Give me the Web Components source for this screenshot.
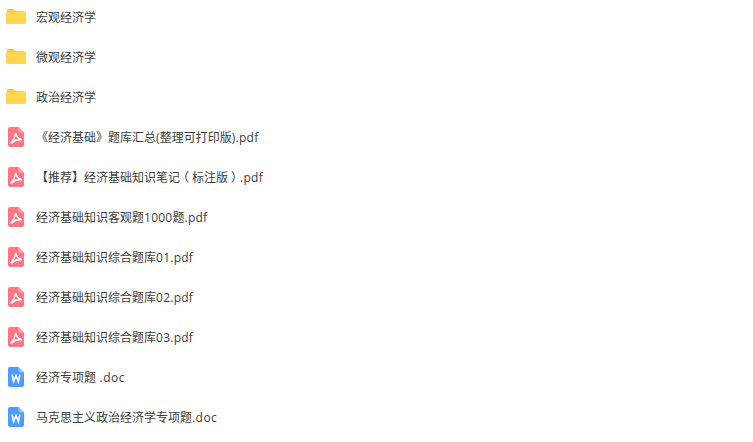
<!DOCTYPE html>
<html lang="zh-CN">
<head>
<meta charset="utf-8">
<title>文件列表</title>
<style>
  html, body { margin: 0; background: #fff; }
  body { font-family: "Noto Sans CJK SC", "Liberation Sans", sans-serif; }
  /* latin runs are a touch wider than the CJK font's own */
  .lat { font-family: "Open Sans", "Liberation Sans", sans-serif; letter-spacing: .25px; }
  .lat.doc { letter-spacing: .45px; }
  /* parens sit in the middle of their cell in the reference */
  .par { font-feature-settings: "halt"; padding: 0 3px; }
</style>
</head>
<body>
<file-list>
  <file-row type="folder">宏观经济学</file-row>
  <file-row type="folder">微观经济学</file-row>
  <file-row type="folder">政治经济学</file-row>
  <file-row type="pdf">《经济基础》题库汇总<span class="lat">(</span>整理可打印版<span class="lat">).pdf</span></file-row>
  <file-row type="pdf">【推荐】经济基础知识笔记<span class="par">（</span>标注版<span class="par">）</span><span class="lat">.pdf</span></file-row>
  <file-row type="pdf">经济基础知识客观题<span class="lat">1000</span>题<span class="lat">.pdf</span></file-row>
  <file-row type="pdf">经济基础知识综合题库<span class="lat">01.pdf</span></file-row>
  <file-row type="pdf">经济基础知识综合题库<span class="lat">02.pdf</span></file-row>
  <file-row type="pdf">经济基础知识综合题库<span class="lat">03.pdf</span></file-row>
  <file-row type="doc">经济专项题<span class="lat doc"> .doc</span></file-row>
  <file-row type="doc">马克思主义政治经济学专项题<span class="lat doc">.doc</span></file-row>
</file-list>

<script>
const ICONS = {
  folder: `
    <svg width="20" height="15" viewBox="0 0 20 15">
      <path d="M1 3V1.500A1.500 1.500 0 0 1 2.500 0h4.200c.6 0 1 .2 1.400.6L9.600 2H17.500A1.500 1.500 0 0 1 19 3.500V5H1z" fill="#fdc72e"/>
      <rect x="0" y="2.500" width="20" height="12.500" rx="1.500" fill="#ffd64f"/>
    </svg>`,
  pdf: `
    <svg width="16" height="20" viewBox="0 0 16 20">
      <path d="M2 0h8.500L16 5.500V18a2 2 0 0 1-2 2H2a2 2 0 0 1-2-2V2a2 2 0 0 1 2-2z" fill="#ff7583"/>
      <path d="M10.500 0L16 5.500H12a1.500 1.500 0 0 1-1.500-1.500z" fill="#ffa8b0"/>
      <path d="M3 15.600c2-1.300 3.700-4.800 4.300-8.400.1-.8.900-.8 1 0 .3 2.800 2 4.600 4.700 4.900.6.100.6.700-.1.700-3-.2-6.400.5-8.700 2.900-.6.500-1.500.4-1.200-.1z" fill="none" stroke="#fff" stroke-width="1.400" stroke-linejoin="round"/>
    </svg>`,
  doc: `
    <svg width="16" height="20" viewBox="0 0 16 20">
      <path d="M2 0h8.500L16 5.500V18a2 2 0 0 1-2 2H2a2 2 0 0 1-2-2V2a2 2 0 0 1 2-2z" fill="#4d9cff"/>
      <path d="M10.500 0L16 5.500H12a1.500 1.500 0 0 1-1.500-1.500z" fill="#94c4ff"/>
      <path d="M4 7.500L5.700 14.500L8 8.500L10.300 14.500L12 7.500" fill="none" stroke="#fff" stroke-width="1.600" stroke-linejoin="miter"/>
    </svg>`
};

class FileRow extends HTMLElement {
  constructor() {
    super();
    this.shadowDOM = this.attachShadow({ mode: 'open' });
  }

  connectedCallback() {
    const type = this.getAttribute('type');
    this.shadowDOM.innerHTML = `
      <style>
        :host {
          display: flex;
          align-items: center;
          height: 34px;
          color: #3c3c3c;
          font-size: 12px;
          line-height: 20px;
          white-space: pre;
        }
        .icon {
          display: flex;
          justify-content: center;
          align-items: center;
          width: 32px;
          margin-right: 4px;
        }
        :host([type="folder"]) .icon { padding-bottom: 1px; }
        svg { display: block; }
      </style>
      <span class="icon">${ICONS[type]}</span>
      <span class="name"><slot></slot></span>
    `;
  }
}

class FileList extends HTMLElement {
  constructor() {
    super();
    this.shadowDOM = this.attachShadow({ mode: 'open' });
    this.shadowDOM.innerHTML = `
      <style>
        :host {
          display: flex;
          flex-direction: column;
          gap: 6px;
        }
      </style>
      <slot></slot>
    `;
  }
}

customElements.define('file-row', FileRow);
customElements.define('file-list', FileList);
</script>
</body>
</html>
